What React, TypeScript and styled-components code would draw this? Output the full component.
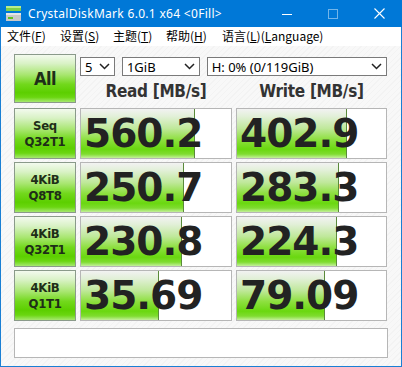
import React from "react";
import styled, { createGlobalStyle } from "styled-components";

const GlobalStyle = createGlobalStyle`
  html, body { margin: 0; padding: 0; }
  body { width: 402px; height: 367px; overflow: hidden; background: #ffffff; }
`;

const Window = styled.div`
  width: 402px;
  height: 367px;
  box-sizing: border-box;
  border: 1px solid #1a7fd4;
  border-top: none;
  display: flex;
  flex-direction: column;
  background: repeating-linear-gradient(135deg, #f8f8f8 0px, #f8f8f8 3px, #f3f3f3 3px, #f3f3f3 4px);
`;

const TitleBar = styled.div`
  height: 27px;
  margin: 0 -1px;
  background: #0078d7;
  display: flex;
  align-items: center;
  color: #fff;
  font-family: "Noto Sans", "Open Sans", sans-serif;
  font-size: 12px;
`;

const AppIcon = styled.svg`
  margin-left: 5px;
  margin-right: 6px;
  flex: none;
`;

const TitleText = styled.div`
  flex: 1;
  white-space: nowrap;
  letter-spacing: 0.3px;
`;

const WinButton = styled.div<{ $dim?: boolean }>`
  width: 46px;
  height: 27px;
  display: flex;
  align-items: center;
  justify-content: center;
  opacity: ${(p) => (p.$dim ? 0.45 : 1)};
`;

const MenuBar = styled.div`
  height: 19px;
  background: #ffffff;
  display: flex;
  align-items: center;
  padding-left: 6px;
  padding-bottom: 2px;
  box-sizing: border-box;
  font-family: "Noto Sans CJK SC", "Noto Sans", sans-serif;
  font-size: 12px;
  color: #000;
`;

const MenuItem = styled.span<{ $w: number }>`
  width: ${(p) => p.$w}px;
  white-space: nowrap;
  u { text-decoration: underline; text-underline-offset: 1px; }
`;

const Content = styled.div`
  padding: 8px 0 0 13px;
  display: flex;
  flex-direction: column;
`;

const Columns = styled.div`
  display: grid;
  grid-template-columns: 62px 152px 151px;
  column-gap: 4px;
`;

const TopRow = styled(Columns)`
  height: 49px;
  margin-bottom: 5px;
`;

const greenFace = `linear-gradient(to bottom, #f3faee 0%, #d9f2c6 18%, #a8e670 42%, #72d81c 62%, #5ccf00 80%, #6ad610 90%, #a6e870 100%)`;

const LabelButton = styled.div`
  box-sizing: border-box;
  border: 1px solid #8a9a8a;
  background: ${greenFace};
  display: flex;
  flex-direction: column;
  align-items: center;
  justify-content: center;
  font-family: "DejaVu Sans", Verdana, sans-serif;
  font-stretch: condensed;
  font-weight: bold;
  font-size: 13px;
  line-height: 16px;
  color: #1e2e18;
  letter-spacing: -0.3px;
`;

const AllButton = styled(LabelButton)`
  font-size: 18px;
  letter-spacing: -0.5px;
`;

const Controls = styled.div`
  grid-column: 2 / 4;
  display: flex;
  flex-direction: column;
`;

const SelectRow = styled.div`
  margin-top: 3px;
  height: 19px;
  display: flex;
  gap: 7px;
`;

const Select = styled.div<{ $w: number }>`
  width: ${(p) => p.$w}px;
  box-sizing: border-box;
  height: 19px;
  border: 1px solid #7a7a7a;
  background: #fff;
  display: flex;
  align-items: center;
  justify-content: space-between;
  padding: 0 4px 0 4px;
  font-family: "Noto Sans", "Open Sans", sans-serif;
  font-size: 13px;
  color: #000;
  white-space: nowrap;
`;

const Headers = styled.div`
  flex: 1;
  display: grid;
  grid-template-columns: 152px 151px;
  column-gap: 4px;
  align-items: end;
`;

const Header = styled.div`
  text-align: center;
  font-family: "DejaVu Sans", Verdana, sans-serif;
  font-stretch: condensed;
  font-weight: bold;
  font-size: 17px;
  line-height: 20px;
  padding-bottom: 2px;
  color: #333;
  letter-spacing: -0.3px;
`;

const Rows = styled.div`
  display: flex;
  flex-direction: column;
  gap: 3px;
`;

const ResultRow = styled(Columns)`
  height: 51px;
`;

const Cell = styled.div`
  position: relative;
  box-sizing: border-box;
  border: 1px solid #b6b6b6;
  background: #fff;
  overflow: hidden;
`;

const Bar = styled.div`
  position: absolute;
  left: 0;
  top: 0;
  bottom: 0;
  background: linear-gradient(to bottom, #f2f2f2 0%, #e2f0d8 15%, #bfe89a 40%, #8ee040 62%, #6ad810 82%, #7fdc30 92%, #c4f09c 100%);
  border-right: 1px solid #5a8a3a;
`;

const Value = styled.div`
  position: relative;
  height: 100%;
  display: flex;
  align-items: center;
  padding-left: 3px;
  font-family: "DejaVu Sans", Verdana, sans-serif;
  font-weight: bold;
  font-size: 39px;
  letter-spacing: -1px;
  color: #222222;
  line-height: 1;
`;

const Status = styled.div`
  margin-top: 7px;
  width: 374px;
  height: 30px;
  box-sizing: border-box;
  border: 1px solid #b6b6b6;
  background: #fff;
`;

const Chevron = () => (
  <svg width="11" height="7" viewBox="0 0 11 7">
    <path d="M1 1 L5.5 5.5 L10 1" fill="none" stroke="#222" strokeWidth="1.5" />
  </svg>
);

const rows = [
  { l: ["Seq", "Q32T1"], r: "560.2", rw: 113, w: "402.9", ww: 109 },
  { l: ["4KiB", "Q8T8"], r: "250.7", rw: 102, w: "283.3", ww: 101 },
  { l: ["4KiB", "Q32T1"], r: "230.8", rw: 100, w: "224.3", ww: 99 },
  { l: ["4KiB", "Q1T1"], r: "35.69", rw: 77, w: "79.09", ww: 87 },
];

export default function App() {
  return (
    <>
      <GlobalStyle />
      <Window>
        <TitleBar>
          <AppIcon width="17" height="17" viewBox="0 0 17 17">
            <rect x="1" y="1" width="15" height="5" fill="#7ed04a" />
            <rect x="1" y="1" width="15" height="2" fill="#b8ec90" />
            <rect x="1" y="8" width="15" height="8" fill="#c8c8c8" />
            <rect x="1" y="8" width="15" height="2" fill="#e6e6e6" />
            <rect x="3" y="12" width="5" height="2" fill="#5cc020" />
          </AppIcon>
          <TitleText>CrystalDiskMark 6.0.1 x64 &lt;0Fill&gt;</TitleText>
          <WinButton>
            <svg width="10" height="10" viewBox="0 0 10 10"><path d="M0 5.5 H10" stroke="#fff" strokeWidth="1" /></svg>
          </WinButton>
          <WinButton $dim>
            <svg width="10" height="10" viewBox="0 0 10 10"><rect x="0.5" y="0.5" width="9" height="9" fill="none" stroke="#fff" strokeWidth="1" /></svg>
          </WinButton>
          <WinButton>
            <svg width="11" height="11" viewBox="0 0 11 11"><path d="M0.5 0.5 L10.5 10.5 M10.5 0.5 L0.5 10.5" stroke="#fff" strokeWidth="1.1" /></svg>
          </WinButton>
        </TitleBar>
        <MenuBar>
          <MenuItem $w={53}>文件(<u>F</u>)</MenuItem>
          <MenuItem $w={53}>设置(<u>S</u>)</MenuItem>
          <MenuItem $w={53}>主题(<u>T</u>)</MenuItem>
          <MenuItem $w={56}>帮助(<u>H</u>)</MenuItem>
          <MenuItem $w={120}>语言(<u>L</u>)(<u>L</u>anguage)</MenuItem>
        </MenuBar>
        <Content>
          <TopRow>
            <AllButton>All</AllButton>
            <Controls>
              <SelectRow>
                <Select $w={35}>5<Chevron /></Select>
                <Select $w={78}>1GiB<Chevron /></Select>
                <Select $w={181}>H: 0% (0/119GiB)<Chevron /></Select>
              </SelectRow>
              <Headers>
                <Header>Read [MB/s]</Header>
                <Header>Write [MB/s]</Header>
              </Headers>
            </Controls>
          </TopRow>
          <Rows>
            {rows.map((r, i) => (
              <ResultRow key={i}>
                <LabelButton>
                  <span>{r.l[0]}</span>
                  <span>{r.l[1]}</span>
                </LabelButton>
                <Cell>
                  <Bar style={{ width: r.rw }} />
                  <Value>{r.r}</Value>
                </Cell>
                <Cell>
                  <Bar style={{ width: r.ww }} />
                  <Value>{r.w}</Value>
                </Cell>
              </ResultRow>
            ))}
          </Rows>
          <Status />
        </Content>
      </Window>
    </>
  );
}
